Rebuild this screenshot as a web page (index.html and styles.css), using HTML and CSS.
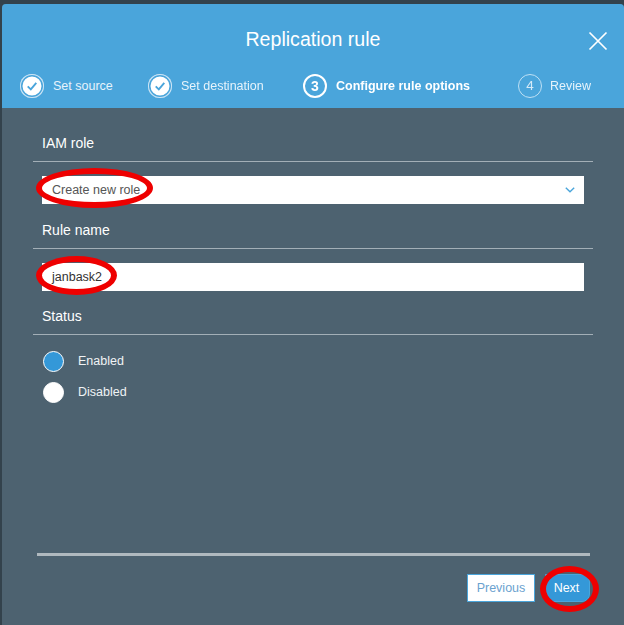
FILE: index.html
```html
<!DOCTYPE html>
<html lang="en">
<head>
<meta charset="utf-8">
<title>Replication rule</title>
<link rel="stylesheet" href="styles.css">
</head>
<body>
<div class="modal">
  <header class="header">
    <h1 class="title">Replication rule</h1>
    <svg class="close" width="20" height="20" viewBox="0 0 20 20"><path d="M1.5 1.5 18.5 18.5M18.5 1.5 1.5 18.5" stroke="#fff" stroke-width="1.7" fill="none"/></svg>
    <ol class="steps">
      <li class="step">
        <span class="badge done"><svg width="12" height="12" viewBox="0 0 14 14"><path d="M2 7.5 5.6 11 12 3.4" stroke="#4aa5db" stroke-width="2.2" fill="none"/></svg></span>
        <span class="step-label">Set source</span>
      </li>
      <li class="step">
        <span class="badge done"><svg width="12" height="12" viewBox="0 0 14 14"><path d="M2 7.5 5.6 11 12 3.4" stroke="#4aa5db" stroke-width="2.2" fill="none"/></svg></span>
        <span class="step-label">Set destination</span>
      </li>
      <li class="step current">
        <span class="badge">3</span>
        <span class="step-label">Configure rule options</span>
      </li>
      <li class="step upcoming">
        <span class="badge">4</span>
        <span class="step-label">Review</span>
      </li>
    </ol>
  </header>
  <main class="content">
    <section class="field">
      <h2 class="field-title">IAM role</h2>
      <div class="control select">
        <span class="value muted">Create new role</span>
        <svg width="10" height="6" viewBox="0 0 10 6"><path d="M.8.8 5 4.8 9.2.8" stroke="#4aa5db" stroke-width="1.4" fill="none"/></svg>
        <span class="mark mark-role"></span>
      </div>
    </section>
    <section class="field">
      <h2 class="field-title">Rule name</h2>
      <div class="control">
        <span class="value">janbask2</span>
        <span class="mark mark-name"></span>
      </div>
    </section>
    <section class="field">
      <h2 class="field-title">Status</h2>
      <div class="radios">
        <div class="radio-row"><span class="radio on"></span><span class="radio-label">Enabled</span></div>
        <div class="radio-row"><span class="radio"></span><span class="radio-label">Disabled</span></div>
      </div>
    </section>
  </main>
  <footer class="footer">
    <div class="buttons">
      <button class="btn btn-prev" type="button">Previous</button>
      <button class="btn btn-next" type="button">Next<span class="mark mark-next"></span></button>
    </div>
  </footer>
</div>
</body>
</html>
```
FILE: styles.css
```css
* { box-sizing: border-box; }
html, body { height: 100%; }
body {
  margin: 0;
  background: #33424c;
  font-family: "Liberation Sans", Arial, sans-serif;
  overflow: hidden;
}
.modal {
  height: 621px;
  margin: 4px 0 0 2px;
  background: #4d6270;
  display: flex;
  flex-direction: column;
  border-radius: 4px 4px 0 0;
  filter: blur(0.5px);
}
.header {
  position: relative;
  height: 104px;
  background: #4aa5db;
  border-radius: 4px 4px 0 0;
}
.title {
  margin: 0;
  padding-top: 23px;
  height: 70px;
  text-align: center;
  color: #fff;
  font-size: 19.6px;
  line-height: 24px;
  font-weight: 400;
}
.close { position: absolute; top: 27px; right: 16px; }
.steps {
  list-style: none;
  margin: 0;
  padding: 0 0 0 18px;
  display: grid;
  grid-template-columns: 128px 155px 215px auto;
  align-items: center;
  color: #e6f3fb;
  font-size: 12.5px;
}
.step { display: flex; align-items: center; gap: 9px; height: 23px; }
.badge {
  width: 24px;
  height: 24px;
  flex: none;
  border-radius: 50%;
  display: flex;
  align-items: center;
  justify-content: center;
  border: 2px solid #fff;
  color: #fff;
  font-size: 14px;
}
.badge.done {
  background: #fff;
  border: 0;
  box-shadow: inset 0 0 0 1px #cfe6f6, inset 0 0 0 2.5px #4aa5db;
}
.current { color: #fff; font-weight: 700; }
.upcoming { gap: 8px; }
.upcoming .badge { border: 1px solid #bfe0f4; color: #d5eaf7; font-size: 13.5px; }
.content {
  flex: 1;
  padding: 17px 31px 0 31px;
}
.field-title {
  margin: 0;
  height: 37px;
  padding: 8px 0 0 9px;
  border-bottom: 1px solid #a3afb7;
  color: #fff;
  font-size: 14px;
  line-height: 20px;
  font-weight: 400;
}
.control {
  position: relative;
  display: flex;
  align-items: center;
  justify-content: space-between;
  height: 28px;
  margin: 14px 9px 0 9px;
  padding: 0 9px 0 10px;
  background: #fff;
  font-size: 12.5px;
  color: #333;
}
.field + .field { margin-top: 8px; }
.field:nth-child(3) { margin-top: 7px; }
.muted { color: #555; }
.radios { display: flex; flex-direction: column; gap: 9px; padding: 15px 0 0 10px; }
.radio-row { display: flex; align-items: center; gap: 14px; height: 22px; }
.radio {
  width: 21px;
  height: 21px;
  border-radius: 50%;
  background: #fff;
  border: 1.5px solid #fff;
}
.radio.on { background: #3498d8; }
.radio-label { color: #f0f3f5; font-size: 12.5px; }
.footer { padding: 0 34px 0 35px; height: 72px; flex: none; }
.buttons {
  border-top: 3px solid #b0b9bf;
  display: flex;
  justify-content: flex-end;
  gap: 10px;
  padding-top: 18px;
}
.btn {
  height: 28px;
  font-family: inherit;
  font-size: 12.5px;
  border: 1px solid #4aa5db;
  padding: 0;
  cursor: pointer;
}
.btn-prev { width: 68px; background: #fff; color: #6ba2cf; }
.btn-next {
  position: relative;
  width: 45px;
  padding-right: 2px;
  background: #3498d8;
  color: #fff;
  border-radius: 0 8px 8px 8px;
}
.mark {
  position: absolute;
  border: 6.5px solid #ee0000;
  border-radius: 50%;
}
.mark-role { left: -6px; top: -8px; width: 117px; height: 40px; }
.mark-name { left: -6px; top: -7px; width: 81px; height: 39px; }
.mark-next { left: -6px; top: -9px; width: 59px; height: 46px; }
```
